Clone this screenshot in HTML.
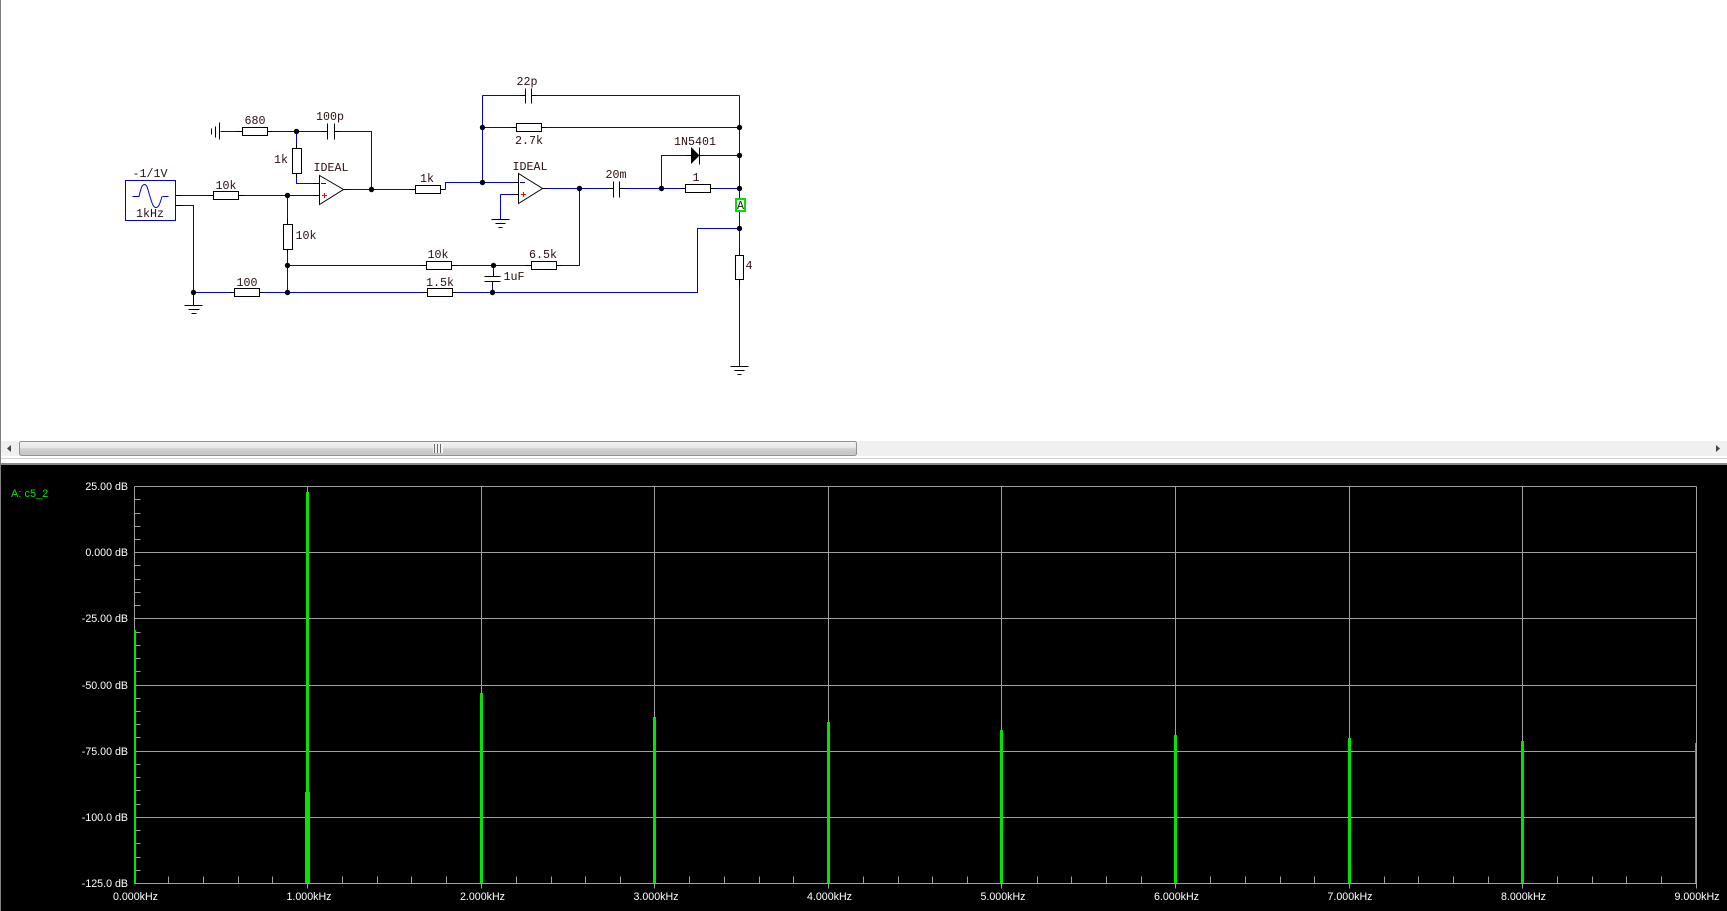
<!DOCTYPE html>
<html>
<head>
<meta charset="utf-8">
<title>Schematic</title>
<style>
html,body{margin:0;padding:0;width:1727px;height:911px;overflow:hidden;background:#fff;}
svg{position:absolute;left:0;top:0;display:block;}
.m{font-family:"Liberation Mono",monospace;font-size:11.67px;fill:#2a1010;text-anchor:middle;}
.p{font-family:"Liberation Sans",Arial,sans-serif;font-size:10.67px;fill:#fff;}
.e{text-anchor:end;}
.c{text-anchor:middle;}
</style>
</head>
<body>
<svg width="1727" height="911" viewBox="0 0 1727 911" xmlns="http://www.w3.org/2000/svg">
<defs>
<linearGradient id="th" x1="0" y1="0" x2="0" y2="1">
<stop offset="0" stop-color="#f4f4f4"/>
<stop offset="0.45" stop-color="#e6e6e6"/>
<stop offset="0.5" stop-color="#d2d2d2"/>
<stop offset="0.9" stop-color="#c4c4c4"/>
<stop offset="1" stop-color="#dcdcdc"/>
</linearGradient>
</defs>
<rect width="1727" height="911" fill="#fff"/>

<!-- scrollbar -->
<rect x="1" y="441" width="1726" height="15" fill="#f0f0f0"/>
<rect x="19.5" y="441.5" width="837" height="14" rx="2" fill="url(#th)" stroke="#909090"/>
<polygon points="11,445 11,452 7,448.5" fill="#444"/>
<polygon points="1716,445 1716,452 1720,448.5" fill="#444"/>
<g fill="#f4f4f4"><rect x="433" y="444" width="10" height="9"/></g>
<g fill="#666"><rect x="434" y="444" width="1" height="9"/><rect x="437" y="444" width="1" height="9"/><rect x="440" y="444" width="1" height="9"/></g>
<rect x="1" y="458" width="1726" height="1" fill="#d4d4d4"/>
<rect x="1" y="463" width="1726" height="2" fill="#8a8a8a"/>

<!-- plot -->
<rect x="1" y="465" width="1726" height="446" fill="#000"/>
<rect x="0" y="0" width="1" height="911" fill="#808080"/>

<g transform="translate(.5 .5)" shape-rendering="crispEdges" fill="none">
<!-- schematic wires -->
<path stroke="#0000e6" d="M220 131H236M272 131H323M296 131V143M339 131H371V189M296 177V183H313M348 189H409M181 195H207M243 195H313M182 205H193V292M287 195V218M287 253V292M193 292H229M263 292H422M456 292H697V228H739M287 265H420M457 265H525M561 265H579V188M493 265V271M492 286V292M445 189V182H513M482 95V182M482 95H520M536 95H739M739 95V198M482 127H511M545 127H739M547 188H607M625 188H680M715 188H739M661 188V155H686M704 155H739M500 194H513M500 194V219M739 211V249M739 285V366"/>
<path stroke="#000" d="M236 131H242M267 131H272M323 131H327M334 131H339M327 123V139M334 123V139M296 143V148M296 173V177M313 183H319M313 195H319M343 189H348M207 195H213M238 195H243M175 195H181M175 205H182M409 189H415M440 189H445M287 218V224M287 249V253M229 292H234M259 292H263M422 292H427M452 292H456M420 265H426M451 265H457M525 265H531M556 265H561M513 182H518M513 194H518M542 188H547M520 95H525M531 95H536M525 88V103M531 88V103M511 127H516M541 127H545M607 188H613M619 188H625M613 181V197M619 181V197M680 188H685M710 188H715M686 155H691M699 155H704M699 147V164M739 249V255M739 279V285M493 271V276M492 281V286M484 276H500M484 281H500M193 292V305M184 305H202M188 309H199M191 313H196M491 219H509M495 223H505M498 227H502M730 366H748M734 370H744M737 374H741M219 122V139M215 126V137M211 128V134"/>
<g stroke="#000" fill="#fff">
<rect x="242" y="127" width="25" height="8"/>
<rect x="292" y="148" width="9" height="25"/>
<rect x="213" y="191" width="25" height="8"/>
<rect x="283" y="224" width="9" height="25"/>
<rect x="234" y="288" width="25" height="8"/>
<rect x="415" y="185" width="25" height="8"/>
<rect x="426" y="261" width="25" height="8"/>
<rect x="427" y="288" width="25" height="8"/>
<rect x="531" y="261" width="25" height="8"/>
<rect x="516" y="123" width="25" height="8"/>
<rect x="685" y="184" width="25" height="8"/>
<rect x="735" y="255" width="8" height="24"/>
</g>
<rect x="125" y="180" width="50" height="40" stroke="#0000e6"/>
<path stroke="#0000e6" d="M132 196H139M162 196H168"/>
</g>

<g fill="none" stroke-width="1">
<path stroke="#0000e6" d="M139 196.5C141 188 142 184.5 144.5 184.5C147.5 184.5 148 191 150 196.5C152 203 153 207.5 156 207.5C159 207.5 160 203 162 196.5"/>
<path stroke="#000" fill="#fff" d="M319.5 175.5L343.5 189.5L319.5 204.5Z"/>
<path stroke="#000" fill="#fff" d="M518.5 173.5L542.5 188.5L518.5 203.5Z"/>
</g>
<path stroke="#0000e6" fill="none" shape-rendering="crispEdges" d="M321 183.5H326M520 182.5H525"/>
<path stroke="#f00" fill="none" shape-rendering="crispEdges" d="M322 195.5H327M324.5 193V198M521 194.5H526M523.5 192V197"/>
<polygon points="691,147 691,164 699.5,155.5" fill="#000"/>

<g fill="#000">
<circle cx="296.5" cy="131.5" r="2.7"/>
<circle cx="371.5" cy="189.5" r="2.7"/>
<circle cx="287.5" cy="195.5" r="2.7"/>
<circle cx="287.5" cy="265.5" r="2.7"/>
<circle cx="287.5" cy="292.5" r="2.7"/>
<circle cx="193.5" cy="292.5" r="2.7"/>
<circle cx="482.5" cy="127.5" r="2.7"/>
<circle cx="482.5" cy="182.5" r="2.7"/>
<circle cx="579.5" cy="188.5" r="2.7"/>
<circle cx="661.5" cy="188.5" r="2.7"/>
<circle cx="739.5" cy="127.5" r="2.7"/>
<circle cx="739.5" cy="155.5" r="2.7"/>
<circle cx="739.5" cy="188.5" r="2.7"/>
<circle cx="739.5" cy="228.5" r="2.7"/>
<circle cx="493.5" cy="265.5" r="2.7"/>
<circle cx="492.5" cy="292.5" r="2.7"/>
</g>

<rect x="736" y="199" width="9" height="12" fill="#fff" stroke="#00e000" stroke-width="2" shape-rendering="crispEdges"/>

<g class="t">
<text class="m" x="150" y="177">-1/1V</text>
<text class="m" x="150" y="217">1kHz</text>
<text class="m" x="226" y="189">10k</text>
<text class="m" x="255" y="124">680</text>
<text class="m" x="330" y="120">100p</text>
<text class="m" x="281" y="163">1k</text>
<text class="m" x="331" y="171">IDEAL</text>
<text class="m" x="306" y="239">10k</text>
<text class="m" x="247" y="286">100</text>
<text class="m" x="427" y="182">1k</text>
<text class="m" x="438" y="258">10k</text>
<text class="m" x="440" y="286">1.5k</text>
<text class="m" x="527" y="85">22p</text>
<text class="m" x="529" y="144">2.7k</text>
<text class="m" x="695" y="145">1N5401</text>
<text class="m" x="530" y="170">IDEAL</text>
<text class="m" x="616" y="178">20m</text>
<text class="m" x="696" y="181">1</text>
<text class="m" x="543" y="258">6.5k</text>
<text class="m" x="514" y="280">1uF</text>
<text class="m" x="749" y="269">4</text>
<text class="m" x="740.5" y="209">A</text>
</g>

<!-- grid -->
<g transform="translate(.5 .5)" shape-rendering="crispEdges" fill="none" stroke="#a0a0a0">
<path d="M134 486H1696M134 552H1696M134 618H1696M134 685H1696M134 751H1696M134 817H1696M134 883H1696"/>
<path d="M134 486V883M307 486V888M481 486V888M654 486V888M828 486V888M1001 486V888M1175 486V888M1349 486V888M1522 486V888M1696 486V888"/>
<path d="M134 499H140M134 513H140M134 526H140M134 539H140M134 565H140M134 579H140M134 592H140M134 605H140M134 632H140M134 645H140M134 658H140M134 671H140M134 698H140M134 711H140M134 724H140M134 737H140M134 764H140M134 777H140M134 790H140M134 804H140M134 830H140M134 843H140M134 857H140M134 870H140"/>
<path d="M168 876V883M203 876V883M238 876V883M272 876V883M342 876V883M377 876V883M411 876V883M446 876V883M516 876V883M551 876V883M585 876V883M620 876V883M689 876V883M724 876V883M759 876V883M793 876V883M863 876V883M898 876V883M932 876V883M967 876V883M1037 876V883M1071 876V883M1106 876V883M1141 876V883M1210 876V883M1245 876V883M1280 876V883M1314 876V883M1384 876V883M1418 876V883M1453 876V883M1488 876V883M1557 876V883M1592 876V883M1626 876V883M1661 876V883"/>
</g>

<!-- spectrum bars -->
<g fill="#00e600" shape-rendering="crispEdges">
<rect x="134" y="630" width="2" height="253"/>
<rect x="306" y="492" width="3" height="391"/>
<rect x="305" y="792" width="5" height="91"/>
<rect x="480" y="693" width="3" height="190"/>
<rect x="653" y="717" width="3" height="166"/>
<rect x="827" y="722" width="3" height="161"/>
<rect x="1000" y="730" width="3" height="153"/>
<rect x="1174" y="735" width="3" height="148"/>
<rect x="1348" y="738" width="3" height="145"/>
<rect x="1521" y="741" width="3" height="142"/>
<rect x="1695" y="743" width="1" height="140"/>
</g>

<!-- plot labels -->
<text x="11" y="497" font-family="'Liberation Sans',Arial,sans-serif" font-size="11" fill="#00e600">A: c5_2</text>
<g class="y">
<text class="p e" x="128" y="490">25.00 dB</text>
<text class="p e" x="128" y="556">0.000 dB</text>
<text class="p e" x="128" y="622">-25.00 dB</text>
<text class="p e" x="128" y="689">-50.00 dB</text>
<text class="p e" x="128" y="755">-75.00 dB</text>
<text class="p e" x="128" y="821">-100.0 dB</text>
<text class="p e" x="128" y="887">-125.0 dB</text>
</g>
<g>
<text class="p c" x="135.5" y="900">0.000kHz</text>
<text class="p c" x="309" y="900">1.000kHz</text>
<text class="p c" x="482.5" y="900">2.000kHz</text>
<text class="p c" x="656" y="900">3.000kHz</text>
<text class="p c" x="829.5" y="900">4.000kHz</text>
<text class="p c" x="1003" y="900">5.000kHz</text>
<text class="p c" x="1176.5" y="900">6.000kHz</text>
<text class="p c" x="1350" y="900">7.000kHz</text>
<text class="p c" x="1523.5" y="900">8.000kHz</text>
<text class="p c" x="1697" y="900">9.000kHz</text>
</g>
</svg>
</body>
</html>
